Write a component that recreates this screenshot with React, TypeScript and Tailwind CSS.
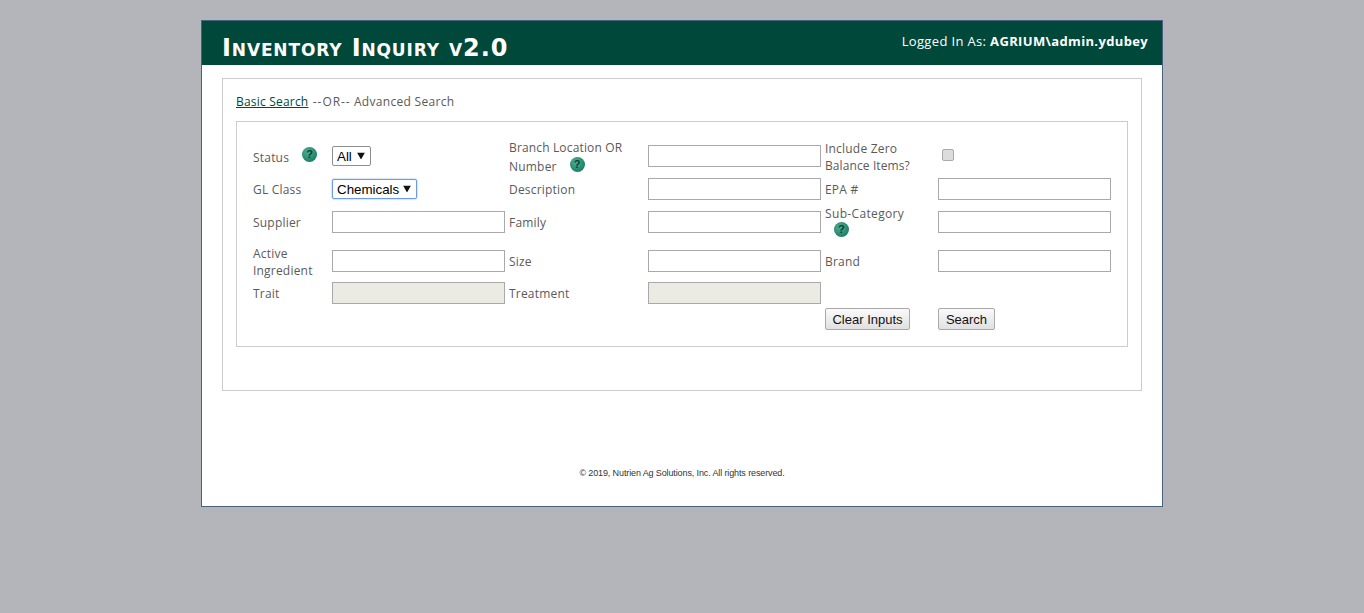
import React from "react";

const labelCls = "text-[12px] leading-[17px] tracking-[0.2px] text-[#5a5a5a]";
const inputCls =
  "h-[22px] w-[173px] border border-[#a9a9a9] bg-white outline-none";
const disabledCls =
  "h-[22px] w-[173px] border border-[#a9a9a9] bg-[#ebebe4] outline-none";
const buttonCls =
  "block h-[22px] rounded-[2px] border border-[#a9a9a9] bg-gradient-to-b from-[#fafafa] to-[#e0e0e0] font-['Liberation_Sans',sans-serif] text-[13px] leading-none text-[#111]";

const Help = ({ className = "" }: { className?: string }) => (
  <span
    className={`inline-flex h-[15px] w-[15px] items-center justify-center rounded-full bg-[radial-gradient(circle_at_40%_35%,#4fb095,#1d8068_70%,#156a56)] font-['Liberation_Sans',sans-serif] text-[11px] leading-none font-bold text-[#0b3d33] ${className}`}
  >
    ?
  </span>
);

const Arrow = () => (
  <svg
    viewBox="0 0 8 7"
    className="pointer-events-none absolute top-1/2 right-[6px] h-[7px] w-[8px] -translate-y-1/2"
  >
    <path d="M0 0h8L4 7z" fill="#111" />
  </svg>
);

const Select = ({
  value,
  focused,
  width,
}: {
  value: string;
  focused?: boolean;
  width: string;
}) => (
  <div className={`relative ${width}`}>
    <select
      defaultValue={value}
      className={`block h-full w-full appearance-none rounded-[2px] bg-white pt-[1px] pb-0 pl-[4px] font-['Liberation_Sans',sans-serif] text-[13.33px] leading-[18px] text-black outline-none ${
        focused
          ? "border border-[#6d9be8] shadow-[0_0_2px_#7fa8ee]"
          : "border border-[#8f8f8f]"
      }`}
    >
      <option>{value}</option>
    </select>
    <Arrow />
  </div>
);

export default function App() {
  return (
    <div className="min-h-[613px] bg-[#b4b5ba] pt-[20px] font-['Open_Sans',sans-serif]">
      <div className="mx-auto h-[487px] w-[962px] border border-[#4a6080] bg-white">
        <div className="flex h-[44px] items-start justify-between bg-[#00483a] pr-[14px] pl-[20px] text-white">
          <h1 className="mt-[10px] font-['DejaVu_Sans',sans-serif] text-[24px] leading-[34px] font-bold tracking-[0.86px] [font-variant-caps:small-caps]">
            Inventory Inquiry v2.0
          </h1>
          <div className="mt-[11px] text-[13px] leading-[18px] tracking-[0.35px]">
            Logged In As: <span className="font-bold">AGRIUM\admin.ydubey</span>
          </div>
        </div>

        <div className="mx-[20px] mt-[13px] h-[313px] border border-[#ccc] px-[13px]">
          <div className="pt-[14px] text-[12px] leading-[17px] tracking-[0.2px] text-[#5a5a5a]">
            <a href="#" className="mr-[1px] text-[#00483a] underline">
              Basic Search
            </a>{" "}
            <span className="tracking-[0.95px]">--OR--</span>{" "}
            <span className="tracking-[0.3px]">Advanced Search</span>
          </div>

          <div className="mt-[11px] h-[226px] border border-[#ccc] pt-[17px] pl-[16px]">
            <div className="grid grid-cols-[79px_177px_139px_177px_113px_173px] grid-rows-[34px_32px_34px_44px_20px_32px] items-center">
              <div className={`${labelCls} flex items-center`}>
                <span className="mt-[3px]">Status</span>
                <Help className="mt-[-3px] ml-[13px]" />
              </div>
              <div className="h-[20px]">
                <Select value="All" width="h-[20px] w-[39px]" />
              </div>
              <div className={labelCls + " pt-[2px] leading-[19px]"}>
                <span className="tracking-[0.15px]">Branch Location OR</span>
                <br />
                Number
                <Help className="ml-[13px] align-[3px]" />
              </div>
              <input className={inputCls} />
              <div className={labelCls + " pt-[2px]"}>
                Include Zero
                <br />
                <span className="tracking-[0.1px]">Balance Items?</span>
              </div>
              <div>
                <input
                  type="checkbox"
                  className="-mt-[2px] ml-[4px] block h-[12px] w-[12px] appearance-none rounded-[2px] border border-[#aaa] bg-[#dcdcdc]"
                />
              </div>

              <div className={labelCls}>GL Class</div>
              <div className="h-[20px]">
                <Select value="Chemicals" focused width="h-[20px] w-[85px]" />
              </div>
              <div className={labelCls}>Description</div>
              <input className={inputCls} />
              <div className={labelCls}>EPA #</div>
              <input className={inputCls} />

              <div className={labelCls}>Supplier</div>
              <input className={inputCls} />
              <div className={labelCls}>Family</div>
              <input className={inputCls} />
              <div className={labelCls}>
                <span className="tracking-[0.35px]">Sub-Category</span>
                <br />
                <Help className="ml-[9px] align-top" />
              </div>
              <input className={inputCls} />

              <div className={labelCls + " pt-[2px]"}>
                Active
                <br />
                Ingredient
              </div>
              <input className={inputCls} />
              <div className={labelCls}>Size</div>
              <input className={inputCls} />
              <div className={labelCls}>Brand</div>
              <input className={inputCls} />

              <div className={labelCls}>Trait</div>
              <input disabled className={disabledCls} />
              <div className={labelCls}>Treatment</div>
              <input disabled className={disabledCls} />
              <div />
              <div />

              <div />
              <div />
              <div />
              <div />
              <div>
                <button className={`${buttonCls} w-[85px]`}>Clear Inputs</button>
              </div>
              <div>
                <button className={`${buttonCls} w-[57px]`}>Search</button>
              </div>
            </div>
          </div>
        </div>

        <p className="mt-[76px] text-center font-['Liberation_Sans',sans-serif] text-[9px] leading-[12px] tracking-[-0.12px] text-[#333]">
          © 2019, Nutrien Ag Solutions, Inc. All rights reserved.
        </p>
      </div>
    </div>
  );
}
